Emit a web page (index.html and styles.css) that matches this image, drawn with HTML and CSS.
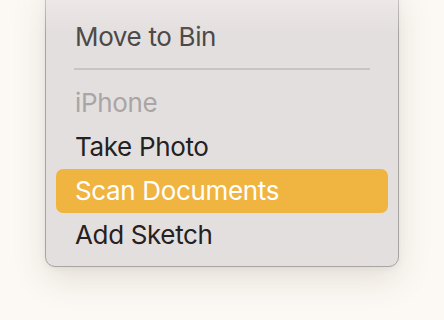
FILE: index.html
```html
<!DOCTYPE html>
<html>
<head>
<meta charset="utf-8">
<link rel="stylesheet" href="styles.css">
</head>
<body>
<div class="stage">
  <div class="menu">
    <div class="item faded">Move to Bin</div>
    <div class="sep"></div>
    <div class="item header">iPhone</div>
    <div class="item">Take Photo</div>
    <div class="item active">Scan Documents</div>
    <div class="item">Add Sketch</div>
  </div>
  <div class="fade"></div>
</div>
</body>
</html>
```
FILE: styles.css
```css
html, body {
  margin: 0;
  padding: 0;
  background: #fcf9f4;
  width: 444px;
  height: 320px;
  overflow: hidden;
}
.stage {
  position: relative;
  width: 444px;
  height: 320px;
  padding-left: 45px;
  box-sizing: border-box;
}
.menu {
  width: 354px;
  box-sizing: border-box;
  margin-top: -30px;
  padding: 44px 0 9px;
  background: #e4dfdf;
  border: 1px solid #a8a4a2;
  border-radius: 10px;
  box-shadow: 0 12px 34px rgba(60, 40, 20, 0.13), 0 2px 6px rgba(0,0,0,0.05);
  font-family: Inter, "Noto Sans", sans-serif;
  font-size: 26px;
  letter-spacing: -0.35px;
  color: #232122;
}
.item {
  height: 44px;
  line-height: 44px;
  margin: 0 10px;
  padding: 0 19px;
  border-radius: 7px;
  white-space: nowrap;
}
.faded {
  color: #4a4848;
}
.header {
  color: #a9a5a5;
}
.active {
  background: #f0b441;
  color: #ffffff;
}
.sep {
  height: 2px;
  background: #c8c4c4;
  margin: 9px 28px 11px 28px;
}
.fade {
  position: absolute;
  left: 0;
  top: 0;
  width: 444px;
  height: 64px;
  background: linear-gradient(to bottom, rgba(252,249,245,0.95) 0px, rgba(252,249,245,0.55) 18px, rgba(252,249,245,0.25) 38px, rgba(252,249,245,0) 64px);
  pointer-events: none;
}
```
